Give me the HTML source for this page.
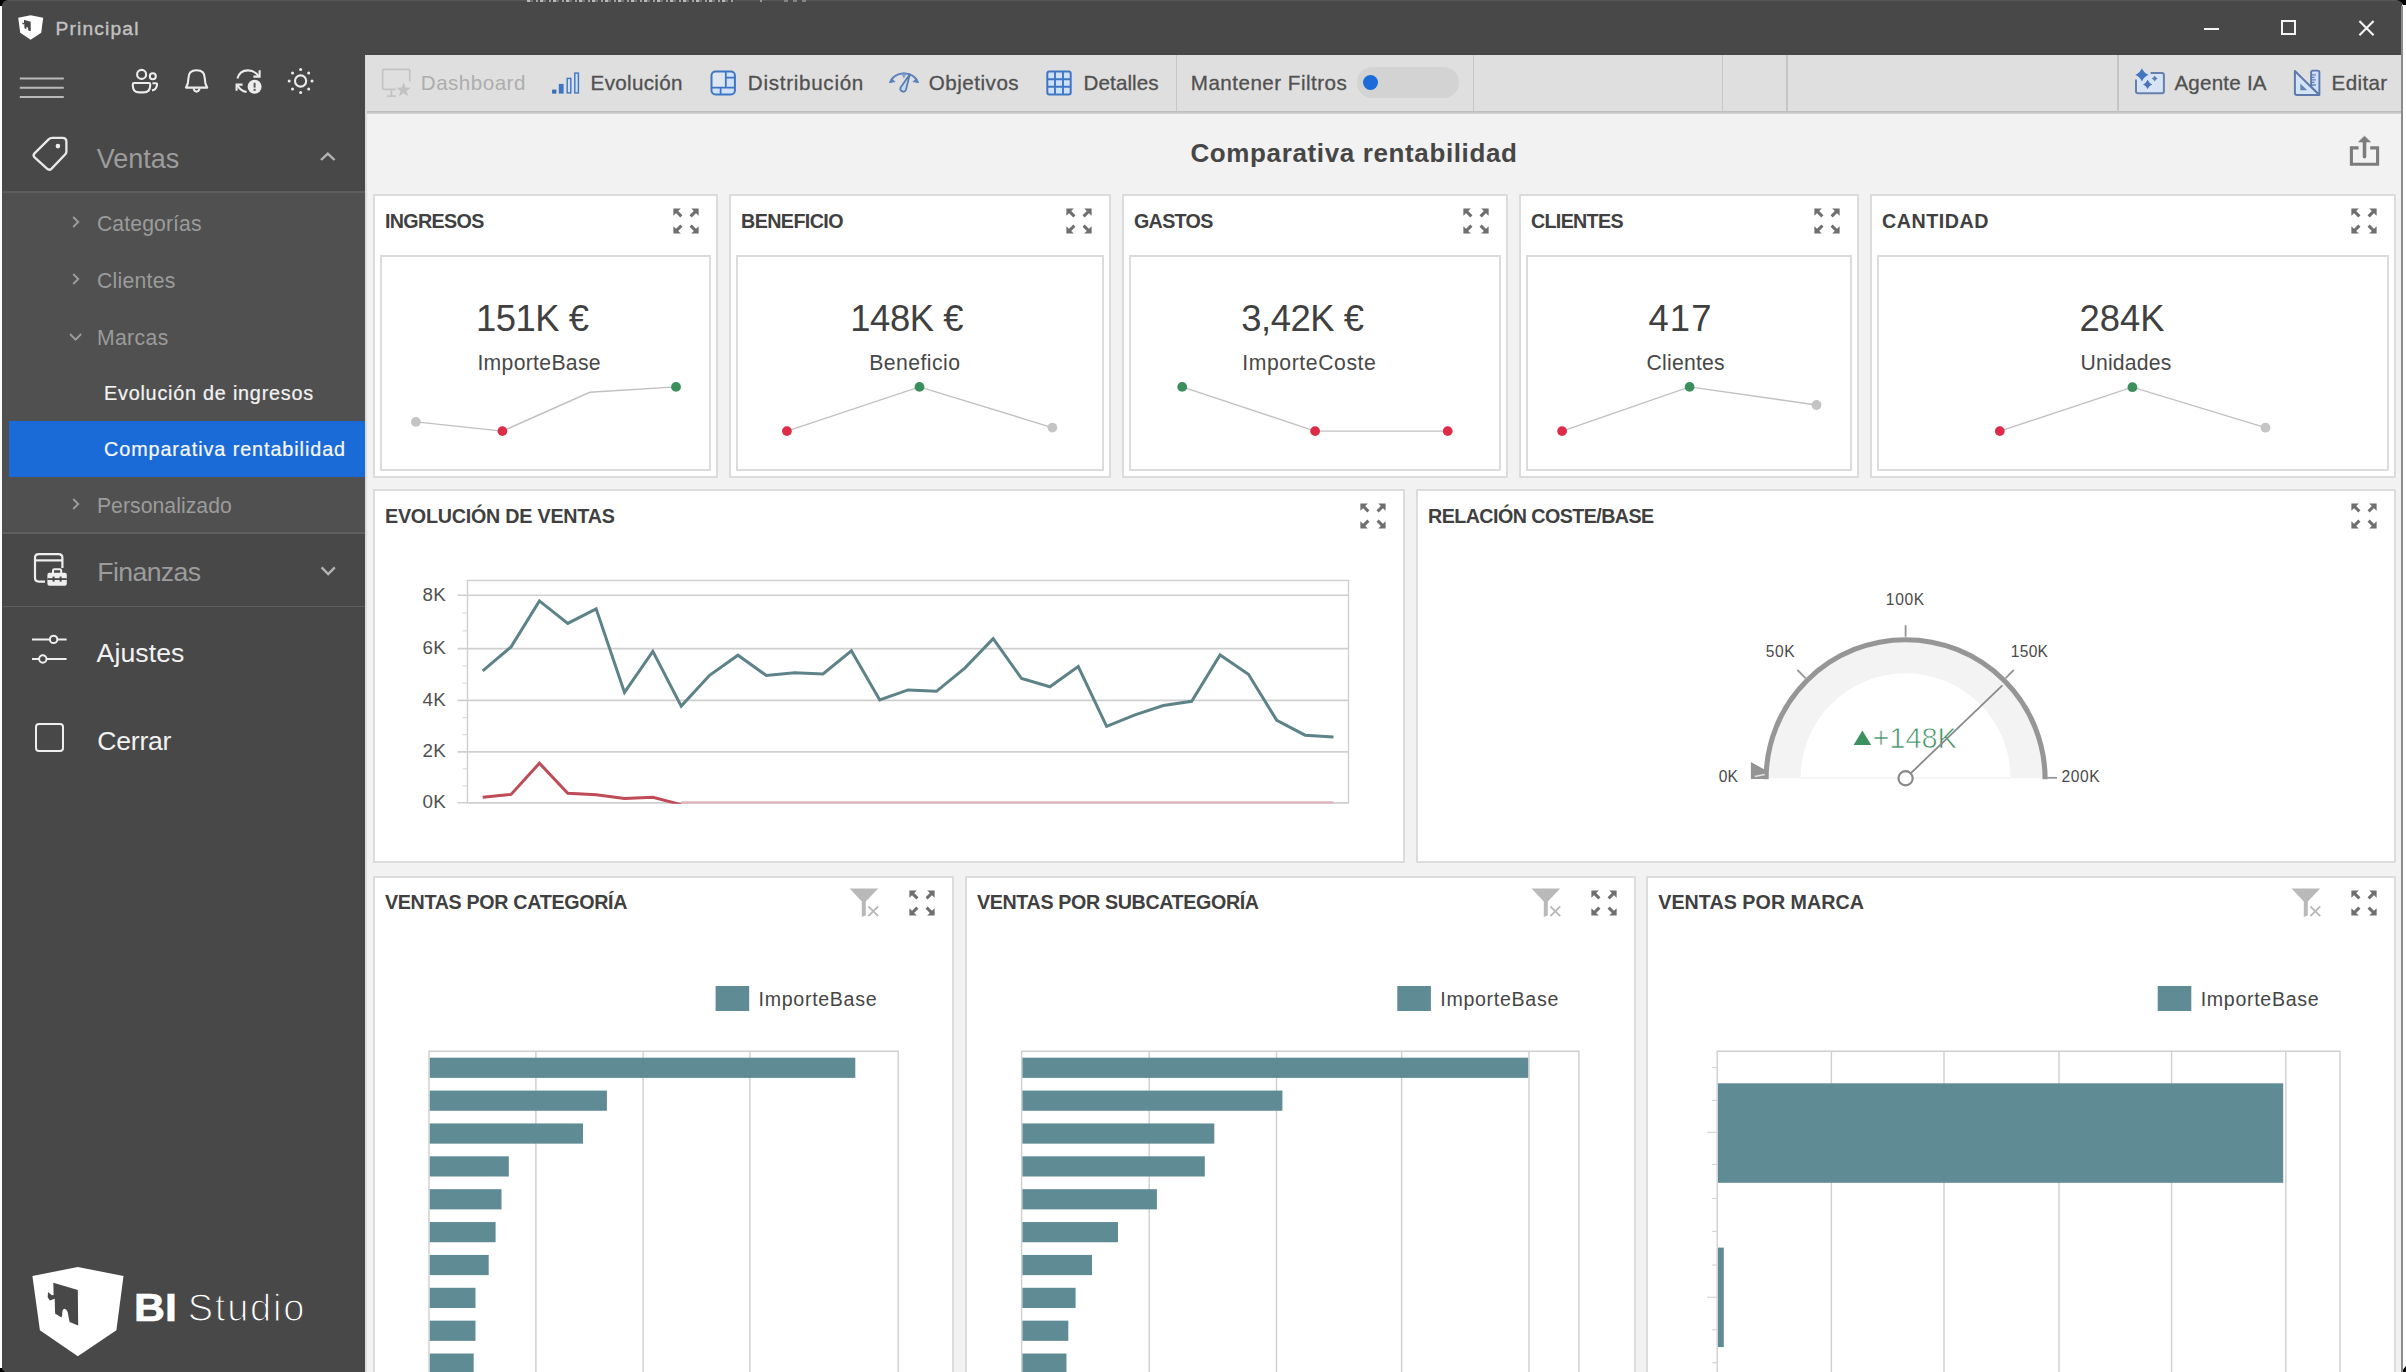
<!DOCTYPE html>
<html lang="es"><head><meta charset="utf-8"><title>Principal</title>
<style>
html,body{margin:0;padding:0;}
body{width:2406px;height:1372px;overflow:hidden;position:relative;background:#fff;font-family:"Liberation Sans",sans-serif;}
.t{position:absolute;white-space:nowrap;}
svg{display:block;overflow:visible;}
#root{position:absolute;left:0;top:0;width:2406px;height:1372px;overflow:hidden;}
</style></head><body><div id="root">
<div style="position:absolute;left:0px;top:0px;width:2406px;height:1372px;background:#fff;"></div>
<div style="position:absolute;left:2px;top:0px;width:2400px;height:1372px;background:#484848;"></div>
<div style="position:absolute;left:8px;top:0px;width:2388px;height:1px;background:#585858;"></div>
<svg style="position:absolute;left:17.2px;top:14.1px" width="27.4" height="27.4" viewBox="0 0 100 100"><path d="M4.4 14 L49.8 5 L95.5 14 L88.4 68.3 L49.8 94.3 L11.9 68.3 Z" fill="#fff"/><path d="M25.3 20.7 L49.8 28.1 L50.2 63.4 L41.6 60.1 L40.5 54.5 Q40 47.5 36.4 46.7 Q34 47 34.2 53 L33.4 55.6 L27.1 51.5 L26.7 36.7 L21.9 38.5 L19.7 35.2 L20 30 L23.8 33.3 L25.6 33 Z" fill="#484848"/></svg>
<div class="t" style="left:55.5px;top:19.05px;font-size:19.2px;line-height:19.2px;color:#c2c2c2;letter-spacing:1.17px;-webkit-text-stroke:0.4px #c2c2c2;">Principal</div>
<div style="position:absolute;left:527px;top:0px;width:208px;height:2px;background:repeating-linear-gradient(90deg,#c4c4c4 0 3px,#777 3px 6px,#484848 6px 9px,#aaa 9px 11px,#484848 11px 13px);opacity:.9;"></div>
<div style="position:absolute;left:760px;top:0px;width:2px;height:2px;background:#999;"></div>
<div style="position:absolute;left:784px;top:0px;width:22px;height:2px;background:repeating-linear-gradient(90deg,#9a9a9a 0 4px,#484848 4px 9px);opacity:.7;"></div>
<div style="position:absolute;left:2203.5px;top:27.8px;width:15px;height:2px;background:#f4f4f4;"></div>
<div style="position:absolute;left:2281.3px;top:20.4px;width:15px;height:15px;border:2px solid #f4f4f4;box-sizing:border-box;"></div>
<svg style="position:absolute;left:2357px;top:18px" width="20" height="20" viewBox="0 0 20 20"><path d="M2.4 3 L16.6 17.2 M16.6 3 L2.4 17.2" stroke="#f4f4f4" stroke-width="2.1" fill="none"/></svg>
<svg style="position:absolute;left:0;top:0" width="8" height="8"><path d="M0 0 H7 A7 7 0 0 0 2 5 V6 H0 Z" fill="#000"/></svg>
<svg style="position:absolute;left:2394px;top:0" width="12" height="8"><path d="M12 0 H3 A8 6 0 0 1 8.5 4 V5 H12 Z" fill="#000"/></svg>
<svg style="position:absolute;left:0;top:1364px" width="8" height="8"><path d="M0 8 H5 A6 6 0 0 1 2 4 H0 Z" fill="#000"/></svg>
<svg style="position:absolute;left:2398px;top:1364px" width="8" height="8"><path d="M8 8 H3 L8 2 Z" fill="#000"/></svg>
<div style="position:absolute;left:365px;top:55px;width:2036.5px;height:1317px;background:#f2f2f2;"></div>
<div style="position:absolute;left:365px;top:55px;width:2036.5px;height:56.5px;background:#dfdfdf;"></div>
<div style="position:absolute;left:365px;top:111px;width:2036.5px;height:3.2px;background:linear-gradient(#bcbcbc,#c9c9c9 70%,#e2e2e2);"></div>
<div style="position:absolute;left:365px;top:55px;width:1.6px;height:1317px;background:#dcdcdc;"></div>
<div style="position:absolute;left:2401.2px;top:6px;width:1.4px;height:1366px;background:#8c8c8c;"></div>
<svg style="position:absolute;left:378px;top:64px" width="38" height="38" viewBox="0 0 38 38"><path d="M17.6 25.4 H6.4 Q4.6 25.4 4.6 23.6 V7 Q4.6 5.4 6.4 5.4 H30 Q31.8 5.4 31.8 7 V17.4" fill="none" stroke="#c3c3c3" stroke-width="1.7"/><path d="M13.4 25.4 V32 M9.2 32.2 H17.8" stroke="#c3c3c3" stroke-width="1.7" fill="none"/><path d="M25.6 18.6 L27.5 23.4 L32.6 23.7 L28.7 27 L30 32 L25.6 29.2 L21.2 32 L22.5 27 L18.6 23.7 L23.7 23.4 Z" fill="#c2c2c2"/></svg>
<div class="t" style="left:420.8px;top:72.66px;font-size:20.6px;line-height:20.6px;color:#adadad;letter-spacing:0.48px;">Dashboard</div>
<svg style="position:absolute;left:548px;top:66px" width="36" height="34" viewBox="0 0 36 34"><rect x="4.1" y="23.6" width="4.3" height="4" fill="#3a6db5"/><rect x="10.8" y="17.9" width="4.8" height="9.7" fill="#3f76c4"/><rect x="19.2" y="12.4" width="3.6" height="14.5" fill="#cfe2fa" stroke="#3f76c4" stroke-width="1.4"/><rect x="26.8" y="7.1" width="3.6" height="19.8" fill="#cfe2fa" stroke="#3f76c4" stroke-width="1.4"/></svg>
<div class="t" style="left:590.6px;top:72.66px;font-size:20.6px;line-height:20.6px;color:#515151;letter-spacing:0.31px;-webkit-text-stroke:0.3px #515151;">Evolución</div>
<svg style="position:absolute;left:706px;top:66px" width="36" height="34" viewBox="0 0 36 34"><rect x="5.5" y="5.5" width="23.4" height="22.9" rx="4" fill="#dfe6ef"/><path d="M19.8 5.5 H25 Q28.9 5.5 28.9 9.4 V24.4 Q28.9 28.4 25 28.4 H9.4 Q5.5 28.4 5.5 24.4 V21.7 H19.8 Z" fill="#cfe2fa"/><rect x="5.5" y="5.5" width="23.4" height="22.9" rx="4" fill="none" stroke="#3f76c4" stroke-width="2"/><path d="M19.8 5.5 V21.7 M5.5 21.7 H28.9 M14.6 21.7 V28.4 M19.8 11.7 H28.9" stroke="#3f76c4" stroke-width="1.8" fill="none"/></svg>
<div class="t" style="left:747.8px;top:72.66px;font-size:20.6px;line-height:20.6px;color:#515151;letter-spacing:0.72px;-webkit-text-stroke:0.3px #515151;">Distribución</div>
<svg style="position:absolute;left:885px;top:66px" width="38" height="34" viewBox="0 0 38 34"><path d="M5.2 16 Q8 8.2 19 7.2 Q30 8.2 32.8 16" fill="none" stroke="#5e82ba" stroke-width="2.1"/><path d="M3.8 17.2 L10.6 16 L6.6 12 Z M34.2 17.2 L27.4 16 L31.4 12 Z" fill="#5e82ba"/><path d="M16.2 7.4 L21.6 7.4 L18.9 12.6 Z" fill="#7a9dcc"/><path d="M24.8 8.2 L21 23.8 A2.9 2.9 0 1 1 15.6 21.6 Z" fill="#c4daf4" stroke="#5779ae" stroke-width="1.7" stroke-linejoin="round"/></svg>
<div class="t" style="left:928.8px;top:72.66px;font-size:20.6px;line-height:20.6px;color:#515151;letter-spacing:0.5px;-webkit-text-stroke:0.3px #515151;">Objetivos</div>
<svg style="position:absolute;left:1042px;top:66px" width="36" height="34" viewBox="0 0 36 34"><rect x="5.3" y="5.5" width="23.4" height="22.9" rx="2" fill="#cfe0fb" stroke="#3f76c4" stroke-width="2"/><path d="M13 5.5 V28.4 M21 5.5 V28.4 M5.3 13.2 H28.7 M5.3 20.8 H28.7" stroke="#3f76c4" stroke-width="1.9" fill="none"/></svg>
<div class="t" style="left:1083.6px;top:72.66px;font-size:20.6px;line-height:20.6px;color:#515151;letter-spacing:0.08px;-webkit-text-stroke:0.3px #515151;">Detalles</div>
<div style="position:absolute;left:1175.5px;top:55px;width:1.6px;height:56px;background:#c6c6c6;"></div>
<div style="position:absolute;left:1472.8px;top:55px;width:1.6px;height:56px;background:#c6c6c6;"></div>
<div style="position:absolute;left:1721.9px;top:55px;width:1.6px;height:56px;background:#c6c6c6;"></div>
<div style="position:absolute;left:1786.4px;top:55px;width:1.6px;height:56px;background:#c6c6c6;"></div>
<div style="position:absolute;left:2117.2px;top:55px;width:1.6px;height:56px;background:#c6c6c6;"></div>
<div class="t" style="left:1190.8px;top:72.66px;font-size:20.6px;line-height:20.6px;color:#515151;letter-spacing:0.48px;-webkit-text-stroke:0.3px #515151;">Mantener Filtros</div>
<div style="position:absolute;left:1356.8px;top:67px;width:102px;height:31px;background:#d3d3d3;border-radius:16px;"></div>
<div style="position:absolute;left:1363.4px;top:74.5px;width:15px;height:15px;background:#1b6bd8;border-radius:50%;"></div>
<svg style="position:absolute;left:2130px;top:62px" width="40" height="38" viewBox="0 0 40 38"><path d="M20.6 10.9 H31.9 Q33.9 10.9 33.9 12.9 V29.3 Q33.9 31.3 31.9 31.3 H8 Q6 31.3 6 29.3 V17.6" fill="#d6e4f6" stroke="#667fae" stroke-width="2"/><path d="M11.9 6.2 Q13.88 10.82 18.5 12.8 Q13.88 14.78 11.9 19.4 Q9.92 14.78 5.3 12.8 Q9.92 10.82 11.9 6.2 Z" fill="#4375c0" stroke="#d6e4f6" stroke-width="1.2" paint-order="stroke"/><path d="M24.7 13.5 Q25.6 15.6 27.7 16.5 Q25.6 17.4 24.7 19.5 Q23.8 17.4 21.7 16.5 Q23.8 15.6 24.7 13.5 Z" fill="#5f7fb2"/><path d="M17.6 17.8 Q18.98 21.02 22.2 22.4 Q18.98 23.78 17.6 27 Q16.22 23.78 13 22.4 Q16.22 21.02 17.6 17.8 Z" fill="#4f74b4"/></svg>
<div class="t" style="left:2174.4px;top:72.66px;font-size:20.6px;line-height:20.6px;color:#515151;letter-spacing:0.22px;-webkit-text-stroke:0.3px #515151;">Agente IA</div>
<svg style="position:absolute;left:2290px;top:64px" width="36" height="36" viewBox="0 0 36 36"><path d="M21.1 8.4 Q21.1 6.6 22.9 6.6 H27.6 Q29.4 6.6 29.4 8.4 V30.9 L21.1 22.6 Z" fill="#cfe0fb" stroke="#6079ac" stroke-width="1.9" stroke-linejoin="round"/><path d="M4.9 7 V29 Q4.9 30.9 6.8 30.9 H29 Z" fill="#d3e4f9" stroke="#6079ac" stroke-width="2" stroke-linejoin="round"/><path d="M10.3 19.4 V26.2 H17.2 Z" fill="#6583b4"/><path d="M21.1 10.8 H25.8 M21.1 13.3 H24.6 M21.1 15.8 H25.8 M21.1 18.4 H24.6 M21.1 21 H25.8" stroke="#5f7fb4" stroke-width="1.3"/></svg>
<div class="t" style="left:2331.6px;top:72.66px;font-size:20.6px;line-height:20.6px;color:#515151;letter-spacing:0.36px;-webkit-text-stroke:0.3px #515151;">Editar</div>
<svg style="position:absolute;left:16px;top:70px" width="54" height="36" viewBox="0 0 54 36"><path d="M3.8 8.5 H47.8 M3.8 17.8 H47.8 M3.8 27 H47.8" stroke="#bababa" stroke-width="2.1" fill="none"/></svg>
<svg style="position:absolute;left:128px;top:64px" width="36" height="34" viewBox="0 0 36 34"><g fill="none" stroke="#ececec" stroke-width="2.1"><circle cx="13.6" cy="10.4" r="4.5"/><path d="M6 19 H21 Q22.2 19 22.2 20.2 V21.6 Q22.2 28.4 15.6 28.4 H11.4 Q4.8 28.4 4.8 21.6 V20.2 Q4.8 19 6 19 Z"/><circle cx="24.8" cy="12.2" r="3"/><path d="M24.4 19.2 H27.8 Q29.2 19.2 29 20.8 Q28.4 25.6 24 26.4"/></g></svg>
<svg style="position:absolute;left:180px;top:64px" width="34" height="34" viewBox="0 0 34 34"><g fill="none" stroke="#ececec" stroke-width="2.1" stroke-linejoin="round"><path d="M6 23.6 Q8.4 20 8.4 14.4 Q8.4 6.2 16.6 6.2 Q24.8 6.2 24.8 14.4 Q24.8 20 27.2 23.6 Z"/><path d="M13.6 24.4 Q14.2 27.6 16.6 27.6 Q19 27.6 19.6 24.4"/></g></svg>
<svg style="position:absolute;left:231px;top:64px" width="36" height="34" viewBox="0 0 36 34"><g fill="none" stroke="#ececec" stroke-width="2.1"><path d="M6.4 14.6 Q8.6 6.4 17 6.4 Q23.6 6.4 27.6 12.2"/><path d="M22.4 12.6 H28.6 V6.2"/><path d="M15.6 28 Q9.6 26.8 6.6 21.4"/><path d="M11.6 20.6 H5.6 V26.8"/></g><circle cx="23.6" cy="22.8" r="7" fill="#ececec"/><rect x="22.6" y="18.8" width="2" height="4.8" fill="#5a5a5a"/><rect x="22.6" y="24.8" width="2" height="2.1" fill="#5a5a5a"/></svg>
<svg style="position:absolute;left:283px;top:64px" width="36" height="34" viewBox="0 0 36 34"><circle cx="17.6" cy="17" r="5.6" fill="none" stroke="#ececec" stroke-width="2.1"/><circle cx="29" cy="17" r="1.5" fill="#ececec"/><circle cx="25.66" cy="25.06" r="1.5" fill="#ececec"/><circle cx="17.6" cy="28.4" r="1.5" fill="#ececec"/><circle cx="9.54" cy="25.06" r="1.5" fill="#ececec"/><circle cx="6.2" cy="17" r="1.5" fill="#ececec"/><circle cx="9.54" cy="8.94" r="1.5" fill="#ececec"/><circle cx="17.6" cy="5.6" r="1.5" fill="#ececec"/><circle cx="25.66" cy="8.94" r="1.5" fill="#ececec"/></svg>
<svg style="position:absolute;left:28px;top:132px" width="46" height="46" viewBox="0 0 46 46"><path d="M24.2 5.9 H34.6 Q38.4 5.9 38.4 9.7 V19.4 Q38.4 21 37.3 22.2 L23.6 36.6 Q21.3 38.8 19 36.7 L6.6 25.4 Q4.6 23.4 6.5 21.4 L20.6 7.4 Q22.2 5.9 24.2 5.9 Z" fill="none" stroke="#e9e9e9" stroke-width="2.3" stroke-linejoin="round"/><circle cx="29.9" cy="14.1" r="2.3" fill="#efefef"/></svg>
<div class="t" style="left:96.8px;top:145.54px;font-size:27px;line-height:27px;color:#9c9c9c;letter-spacing:-0.03px;">Ventas</div>
<svg style="position:absolute;left:318px;top:150px" width="20" height="14" viewBox="0 0 20 14"><path d="M3 10 L9.8 3.6 L16.6 10" fill="none" stroke="#b4b4b4" stroke-width="2.4"/></svg>
<div style="position:absolute;left:2px;top:192px;width:363px;height:341px;background:#505050;"></div>
<div style="position:absolute;left:2px;top:191.4px;width:363px;height:1.6px;background:#5d5d5d;"></div>
<div style="position:absolute;left:2px;top:532.2px;width:363px;height:1.6px;background:#5f5f5f;"></div>
<div style="position:absolute;left:2px;top:605.6px;width:363px;height:1.6px;background:#5f5f5f;"></div>
<svg style="position:absolute;left:70px;top:214px" width="12" height="16" viewBox="0 0 12 16"><path d="M3.2 3 L8.2 8 L3.2 13" fill="none" stroke="#9c9c9c" stroke-width="1.9"/></svg>
<div class="t" style="left:96.9px;top:212.75px;font-size:21.2px;line-height:21.2px;color:#9b9b9b;letter-spacing:0.12px;">Categorías</div>
<svg style="position:absolute;left:70px;top:271px" width="12" height="16" viewBox="0 0 12 16"><path d="M3.2 3 L8.2 8 L3.2 13" fill="none" stroke="#9c9c9c" stroke-width="1.9"/></svg>
<div class="t" style="left:96.9px;top:269.95px;font-size:21.2px;line-height:21.2px;color:#9b9b9b;letter-spacing:0.29px;">Clientes</div>
<svg style="position:absolute;left:67px;top:330px" width="18" height="14" viewBox="0 0 18 14"><path d="M3 4 L8.6 9.6 L14.2 4" fill="none" stroke="#9c9c9c" stroke-width="1.9"/></svg>
<div class="t" style="left:96.9px;top:327.15px;font-size:21.2px;line-height:21.2px;color:#9b9b9b;letter-spacing:0.4px;">Marcas</div>
<div class="t" style="left:104px;top:384.04px;font-size:19.8px;line-height:19.8px;color:#f3f3f3;letter-spacing:0.78px;-webkit-text-stroke:0.22px #f3f3f3;">Evolución de ingresos</div>
<div style="position:absolute;left:9px;top:421px;width:356px;height:55.5px;background:#1a6ad8;"></div>
<div class="t" style="left:104px;top:439.84px;font-size:19.8px;line-height:19.8px;color:#f6f8fc;letter-spacing:0.92px;-webkit-text-stroke:0.22px #f6f8fc;">Comparativa rentabilidad</div>
<svg style="position:absolute;left:70px;top:496px" width="12" height="16" viewBox="0 0 12 16"><path d="M3.2 3 L8.2 8 L3.2 13" fill="none" stroke="#9c9c9c" stroke-width="1.9"/></svg>
<div class="t" style="left:96.9px;top:495.05px;font-size:21.2px;line-height:21.2px;color:#9b9b9b;letter-spacing:0.05px;">Personalizado</div>
<svg style="position:absolute;left:30px;top:549px" width="42" height="42" viewBox="0 0 42 42"><g fill="none" stroke="#efefef" stroke-width="2.2"><path d="M15 32.6 H8.8 Q5 32.6 5 28.8 V9 Q5 5.2 8.8 5.2 H28.6 Q32.4 5.2 32.4 9 V19"/><path d="M5 11.4 H32.4"/></g><rect x="17.4" y="23.8" width="19.4" height="13" rx="2" fill="#efefef"/><path d="M23 24 V21.6 Q23 20.2 24.4 20.2 H29.8 Q31.2 20.2 31.2 21.6 V24" fill="none" stroke="#efefef" stroke-width="2"/><rect x="17.4" y="29.2" width="19.4" height="1.8" fill="#484848"/><rect x="22.6" y="27.6" width="2" height="5" fill="#484848"/><rect x="29.6" y="27.6" width="2" height="5" fill="#484848"/></svg>
<div class="t" style="left:97.3px;top:558.68px;font-size:26.6px;line-height:26.6px;color:#9c9c9c;letter-spacing:-0.6px;">Finanzas</div>
<svg style="position:absolute;left:318px;top:563px" width="20" height="16" viewBox="0 0 20 16"><path d="M3.6 4.4 L10.2 11 L16.8 4.4" fill="none" stroke="#b4b4b4" stroke-width="2.4"/></svg>
<svg style="position:absolute;left:28px;top:628px" width="44" height="42" viewBox="0 0 44 42"><g fill="none" stroke="#eeeeee" stroke-width="2"><path d="M4 11.4 H22 M29.4 11.4 H38.6"/><circle cx="25.6" cy="11.4" r="3.7"/><path d="M4 31 H11 M18.4 31 H38.6"/><circle cx="14.8" cy="31" r="3.7"/></g></svg>
<div class="t" style="left:96.6px;top:639.88px;font-size:26.6px;line-height:26.6px;color:#f2f2f2;letter-spacing:0.1px;">Ajustes</div>
<div style="position:absolute;left:34.6px;top:723.4px;width:29.6px;height:29px;border:2.2px solid #eee;border-radius:4px;box-sizing:border-box;"></div>
<div class="t" style="left:97.3px;top:728.48px;font-size:26.6px;line-height:26.6px;color:#f2f2f2;letter-spacing:-0.25px;">Cerrar</div>
<svg style="position:absolute;left:28px;top:1262px" width="100" height="100" viewBox="0 0 100 100"><path d="M4.4 14 L49.8 5 L95.5 14 L88.4 68.3 L49.8 94.3 L11.9 68.3 Z" fill="#fff"/><path d="M25.3 20.7 L49.8 28.1 L50.2 63.4 L41.6 60.1 L40.5 54.5 Q40 47.5 36.4 46.7 Q34 47 34.2 53 L33.4 55.6 L27.1 51.5 L26.7 36.7 L21.9 38.5 L19.7 35.2 L20 30 L23.8 33.3 L25.6 33 Z" fill="#484848"/></svg>
<div class="t" style="left:133.7px;top:1289.23px;font-size:38px;line-height:38px;color:#fff;font-weight:bold;-webkit-text-stroke:0.6px #fff;transform:scaleX(1.13);transform-origin:0 0;">BI</div>
<div class="t" style="left:187.7px;top:1289.23px;font-size:38px;line-height:38px;color:#fff;letter-spacing:1.79px;-webkit-text-stroke:1.25px #484848;">Studio</div>
<div class="t" style="left:1190.4px;top:140.09px;font-size:26px;line-height:26px;color:#464646;letter-spacing:0.63px;font-weight:bold;">Comparativa rentabilidad</div>
<svg style="position:absolute;left:2344px;top:132px" width="40" height="38" viewBox="0 0 40 38"><path d="M14.6 15.9 H7.4 V32.3 H33.6 V15.9 H26.2" fill="none" stroke="#7c7c7c" stroke-width="3.1"/><path d="M20.5 24.8 V9" stroke="#7c7c7c" stroke-width="3.6" stroke-linecap="round" fill="none"/><path d="M20.5 4.2 L26.4 9.9 H14.6 Z" fill="#7c7c7c" stroke="#7c7c7c" stroke-width="0.8" stroke-linejoin="round"/></svg>
<div style="position:absolute;left:373px;top:194px;width:345px;height:284px;background:#fff;border:2px solid #dcdcdc;box-sizing:border-box;"></div>
<div class="t" style="left:385px;top:212.02px;font-size:19.7px;line-height:19.7px;color:#404040;letter-spacing:-0.66px;font-weight:bold;">INGRESOS</div>
<svg style="position:absolute;left:673px;top:207.6px" width="26" height="26" viewBox="0 0 26 26"><path d="M0.4 0.4 L7.8 0.4 L0.4 7.8 Z" fill="#6f6f6f"/><path d="M2.4 2.4 L8.4 8.4" stroke="#6f6f6f" stroke-width="3" fill="none"/><path d="M25.6 0.4 L18.2 0.4 L25.6 7.8 Z" fill="#6f6f6f"/><path d="M23.6 2.4 L17.6 8.4" stroke="#6f6f6f" stroke-width="3" fill="none"/><path d="M0.4 25.6 L7.8 25.6 L0.4 18.2 Z" fill="#6f6f6f"/><path d="M2.4 23.6 L8.4 17.6" stroke="#6f6f6f" stroke-width="3" fill="none"/><path d="M25.6 25.6 L18.2 25.6 L25.6 18.2 Z" fill="#6f6f6f"/><path d="M23.6 23.6 L17.6 17.6" stroke="#6f6f6f" stroke-width="3" fill="none"/></svg>
<div style="position:absolute;left:380px;top:255px;width:331px;height:215.6px;border:2px solid #dcdcdc;box-sizing:border-box;"></div>
<div style="position:absolute;left:729px;top:194px;width:382px;height:284px;background:#fff;border:2px solid #dcdcdc;box-sizing:border-box;"></div>
<div class="t" style="left:741px;top:212.02px;font-size:19.7px;line-height:19.7px;color:#404040;letter-spacing:-0.58px;font-weight:bold;">BENEFICIO</div>
<svg style="position:absolute;left:1066px;top:207.6px" width="26" height="26" viewBox="0 0 26 26"><path d="M0.4 0.4 L7.8 0.4 L0.4 7.8 Z" fill="#6f6f6f"/><path d="M2.4 2.4 L8.4 8.4" stroke="#6f6f6f" stroke-width="3" fill="none"/><path d="M25.6 0.4 L18.2 0.4 L25.6 7.8 Z" fill="#6f6f6f"/><path d="M23.6 2.4 L17.6 8.4" stroke="#6f6f6f" stroke-width="3" fill="none"/><path d="M0.4 25.6 L7.8 25.6 L0.4 18.2 Z" fill="#6f6f6f"/><path d="M2.4 23.6 L8.4 17.6" stroke="#6f6f6f" stroke-width="3" fill="none"/><path d="M25.6 25.6 L18.2 25.6 L25.6 18.2 Z" fill="#6f6f6f"/><path d="M23.6 23.6 L17.6 17.6" stroke="#6f6f6f" stroke-width="3" fill="none"/></svg>
<div style="position:absolute;left:736px;top:255px;width:368px;height:215.6px;border:2px solid #dcdcdc;box-sizing:border-box;"></div>
<div style="position:absolute;left:1122px;top:194px;width:386px;height:284px;background:#fff;border:2px solid #dcdcdc;box-sizing:border-box;"></div>
<div class="t" style="left:1134px;top:212.02px;font-size:19.7px;line-height:19.7px;color:#404040;letter-spacing:-0.69px;font-weight:bold;">GASTOS</div>
<svg style="position:absolute;left:1463px;top:207.6px" width="26" height="26" viewBox="0 0 26 26"><path d="M0.4 0.4 L7.8 0.4 L0.4 7.8 Z" fill="#6f6f6f"/><path d="M2.4 2.4 L8.4 8.4" stroke="#6f6f6f" stroke-width="3" fill="none"/><path d="M25.6 0.4 L18.2 0.4 L25.6 7.8 Z" fill="#6f6f6f"/><path d="M23.6 2.4 L17.6 8.4" stroke="#6f6f6f" stroke-width="3" fill="none"/><path d="M0.4 25.6 L7.8 25.6 L0.4 18.2 Z" fill="#6f6f6f"/><path d="M2.4 23.6 L8.4 17.6" stroke="#6f6f6f" stroke-width="3" fill="none"/><path d="M25.6 25.6 L18.2 25.6 L25.6 18.2 Z" fill="#6f6f6f"/><path d="M23.6 23.6 L17.6 17.6" stroke="#6f6f6f" stroke-width="3" fill="none"/></svg>
<div style="position:absolute;left:1129px;top:255px;width:372px;height:215.6px;border:2px solid #dcdcdc;box-sizing:border-box;"></div>
<div style="position:absolute;left:1519px;top:194px;width:340px;height:284px;background:#fff;border:2px solid #dcdcdc;box-sizing:border-box;"></div>
<div class="t" style="left:1531px;top:212.02px;font-size:19.7px;line-height:19.7px;color:#404040;letter-spacing:-0.69px;font-weight:bold;">CLIENTES</div>
<svg style="position:absolute;left:1814px;top:207.6px" width="26" height="26" viewBox="0 0 26 26"><path d="M0.4 0.4 L7.8 0.4 L0.4 7.8 Z" fill="#6f6f6f"/><path d="M2.4 2.4 L8.4 8.4" stroke="#6f6f6f" stroke-width="3" fill="none"/><path d="M25.6 0.4 L18.2 0.4 L25.6 7.8 Z" fill="#6f6f6f"/><path d="M23.6 2.4 L17.6 8.4" stroke="#6f6f6f" stroke-width="3" fill="none"/><path d="M0.4 25.6 L7.8 25.6 L0.4 18.2 Z" fill="#6f6f6f"/><path d="M2.4 23.6 L8.4 17.6" stroke="#6f6f6f" stroke-width="3" fill="none"/><path d="M25.6 25.6 L18.2 25.6 L25.6 18.2 Z" fill="#6f6f6f"/><path d="M23.6 23.6 L17.6 17.6" stroke="#6f6f6f" stroke-width="3" fill="none"/></svg>
<div style="position:absolute;left:1526px;top:255px;width:326px;height:215.6px;border:2px solid #dcdcdc;box-sizing:border-box;"></div>
<div style="position:absolute;left:1870px;top:194px;width:526px;height:284px;background:#fff;border:2px solid #dcdcdc;box-sizing:border-box;"></div>
<div class="t" style="left:1882px;top:212.02px;font-size:19.7px;line-height:19.7px;color:#404040;letter-spacing:0.52px;font-weight:bold;">CANTIDAD</div>
<svg style="position:absolute;left:2351px;top:207.6px" width="26" height="26" viewBox="0 0 26 26"><path d="M0.4 0.4 L7.8 0.4 L0.4 7.8 Z" fill="#6f6f6f"/><path d="M2.4 2.4 L8.4 8.4" stroke="#6f6f6f" stroke-width="3" fill="none"/><path d="M25.6 0.4 L18.2 0.4 L25.6 7.8 Z" fill="#6f6f6f"/><path d="M23.6 2.4 L17.6 8.4" stroke="#6f6f6f" stroke-width="3" fill="none"/><path d="M0.4 25.6 L7.8 25.6 L0.4 18.2 Z" fill="#6f6f6f"/><path d="M2.4 23.6 L8.4 17.6" stroke="#6f6f6f" stroke-width="3" fill="none"/><path d="M25.6 25.6 L18.2 25.6 L25.6 18.2 Z" fill="#6f6f6f"/><path d="M23.6 23.6 L17.6 17.6" stroke="#6f6f6f" stroke-width="3" fill="none"/></svg>
<div style="position:absolute;left:1877px;top:255px;width:512px;height:215.6px;border:2px solid #dcdcdc;box-sizing:border-box;"></div>
<div class="t" style="left:475.9px;top:301.09px;font-size:36.4px;line-height:36.4px;color:#404040;letter-spacing:-0.47px;">151K €</div>
<div class="t" style="left:477.4px;top:351.85px;font-size:21.2px;line-height:21.2px;color:#484848;letter-spacing:0.31px;">ImporteBase</div>
<div class="t" style="left:850.3px;top:301.09px;font-size:36.4px;line-height:36.4px;color:#404040;letter-spacing:-0.43px;">148K €</div>
<div class="t" style="left:869.2px;top:351.85px;font-size:21.2px;line-height:21.2px;color:#484848;letter-spacing:0.45px;">Beneficio</div>
<div class="t" style="left:1241.2px;top:301.09px;font-size:36.4px;line-height:36.4px;color:#404040;letter-spacing:-0.45px;">3,42K €</div>
<div class="t" style="left:1242.2px;top:351.85px;font-size:21.2px;line-height:21.2px;color:#484848;letter-spacing:0.59px;">ImporteCoste</div>
<div class="t" style="left:1648.5px;top:301.09px;font-size:36.4px;line-height:36.4px;color:#404040;letter-spacing:1.13px;">417</div>
<div class="t" style="left:1646.6px;top:351.85px;font-size:21.2px;line-height:21.2px;color:#484848;letter-spacing:0.22px;">Clientes</div>
<div class="t" style="left:2079.4px;top:301.09px;font-size:36.4px;line-height:36.4px;color:#404040;letter-spacing:0.03px;">284K</div>
<div class="t" style="left:2080.4px;top:351.85px;font-size:21.2px;line-height:21.2px;color:#484848;letter-spacing:0.22px;">Unidades</div>
<svg style="position:absolute;left:0;top:0" width="2406" height="1372" viewBox="0 0 2406 1372"><path d="M415.9 421.9 L502.4 431.1 L589.8 392.3 L676 386.9" fill="none" stroke="#c0c0c0" stroke-width="1.4"/><circle cx="415.9" cy="421.9" r="4.9" fill="#c4c4c4"/><circle cx="502.4" cy="431.1" r="4.9" fill="#dc2c48"/><circle cx="676" cy="386.9" r="4.9" fill="#3b8f5c"/></svg>
<svg style="position:absolute;left:0;top:0" width="2406" height="1372" viewBox="0 0 2406 1372"><path d="M786.9 431.1 L919.5 386.9 L1052.4 427.6" fill="none" stroke="#c0c0c0" stroke-width="1.4"/><circle cx="786.9" cy="431.1" r="4.9" fill="#dc2c48"/><circle cx="919.5" cy="386.9" r="4.9" fill="#3b8f5c"/><circle cx="1052.4" cy="427.6" r="4.9" fill="#c4c4c4"/></svg>
<svg style="position:absolute;left:0;top:0" width="2406" height="1372" viewBox="0 0 2406 1372"><path d="M1182.2 386.9 L1315.1 431.1 L1447.7 431.1" fill="none" stroke="#c0c0c0" stroke-width="1.4"/><circle cx="1182.2" cy="386.9" r="4.9" fill="#3b8f5c"/><circle cx="1315.1" cy="431.1" r="4.9" fill="#dc2c48"/><circle cx="1447.7" cy="431.1" r="4.9" fill="#dc2c48"/></svg>
<svg style="position:absolute;left:0;top:0" width="2406" height="1372" viewBox="0 0 2406 1372"><path d="M1562.1 431.1 L1689.6 386.9 L1816.5 405" fill="none" stroke="#c0c0c0" stroke-width="1.4"/><circle cx="1562.1" cy="431.1" r="4.9" fill="#dc2c48"/><circle cx="1689.6" cy="386.9" r="4.9" fill="#3b8f5c"/><circle cx="1816.5" cy="405" r="4.9" fill="#c4c4c4"/></svg>
<svg style="position:absolute;left:0;top:0" width="2406" height="1372" viewBox="0 0 2406 1372"><path d="M1999.8 431.1 L2132.4 387.2 L2265.5 427.7" fill="none" stroke="#c0c0c0" stroke-width="1.4"/><circle cx="1999.8" cy="431.1" r="4.9" fill="#dc2c48"/><circle cx="2132.4" cy="387.2" r="4.9" fill="#3b8f5c"/><circle cx="2265.5" cy="427.7" r="4.9" fill="#c4c4c4"/></svg>
<div style="position:absolute;left:373px;top:489px;width:1031.6px;height:374px;background:#fff;border:2px solid #dcdcdc;box-sizing:border-box;"></div>
<div class="t" style="left:385px;top:507.02px;font-size:19.7px;line-height:19.7px;color:#404040;letter-spacing:-0.22px;font-weight:bold;">EVOLUCIÓN DE VENTAS</div>
<svg style="position:absolute;left:1359.6px;top:502.6px" width="26" height="26" viewBox="0 0 26 26"><path d="M0.4 0.4 L7.8 0.4 L0.4 7.8 Z" fill="#6f6f6f"/><path d="M2.4 2.4 L8.4 8.4" stroke="#6f6f6f" stroke-width="3" fill="none"/><path d="M25.6 0.4 L18.2 0.4 L25.6 7.8 Z" fill="#6f6f6f"/><path d="M23.6 2.4 L17.6 8.4" stroke="#6f6f6f" stroke-width="3" fill="none"/><path d="M0.4 25.6 L7.8 25.6 L0.4 18.2 Z" fill="#6f6f6f"/><path d="M2.4 23.6 L8.4 17.6" stroke="#6f6f6f" stroke-width="3" fill="none"/><path d="M25.6 25.6 L18.2 25.6 L25.6 18.2 Z" fill="#6f6f6f"/><path d="M23.6 23.6 L17.6 17.6" stroke="#6f6f6f" stroke-width="3" fill="none"/></svg>
<svg style="position:absolute;left:0;top:0" width="2406" height="1372" viewBox="0 0 2406 1372"><path d="M457.5 595.3 H1348.5" stroke="#cfcfcf" stroke-width="1.6"/><path d="M457.5 648.6 H1348.5" stroke="#cfcfcf" stroke-width="1.6"/><path d="M457.5 700.4 H1348.5" stroke="#cfcfcf" stroke-width="1.6"/><path d="M457.5 751.9 H1348.5" stroke="#cfcfcf" stroke-width="1.6"/><path d="M457.5 802.8 H1348.5" stroke="#cfcfcf" stroke-width="1.6"/><path d="M462.5 785.83 H467.5" stroke="#dcdcdc" stroke-width="1.2"/><path d="M462.5 768.87 H467.5" stroke="#dcdcdc" stroke-width="1.2"/><path d="M462.5 734.73 H467.5" stroke="#dcdcdc" stroke-width="1.2"/><path d="M462.5 717.57 H467.5" stroke="#dcdcdc" stroke-width="1.2"/><path d="M462.5 683.13 H467.5" stroke="#dcdcdc" stroke-width="1.2"/><path d="M462.5 665.87 H467.5" stroke="#dcdcdc" stroke-width="1.2"/><path d="M462.5 630.83 H467.5" stroke="#dcdcdc" stroke-width="1.2"/><path d="M462.5 613.07 H467.5" stroke="#dcdcdc" stroke-width="1.2"/><rect x="467.5" y="580.5" width="881" height="222.3" fill="none" stroke="#cfcfcf" stroke-width="1.4"/><svg x="467.5" y="580.5" width="881" height="223.2" viewBox="467.5 580.5 881 223.2" style="overflow:hidden"><path d="M482.7 670.8 L511.06 646.9 L539.42 600.9 L567.78 623.4 L596.14 608.8 L624.5 692.4 L652.86 651.4 L681.22 706.1 L709.58 675.3 L737.94 655.2 L766.3 675.5 L794.66 672.8 L823.02 673.9 L851.38 650.8 L879.74 699.9 L908.1 689.9 L936.46 691.3 L964.82 668.1 L993.18 638.6 L1021.54 678.5 L1049.9 686.8 L1078.26 666.6 L1106.62 726.3 L1134.98 714.8 L1163.34 705.5 L1191.7 701.3 L1220.06 655 L1248.42 674.3 L1276.78 720.4 L1305.14 735.2 L1333.5 736.9" fill="none" stroke="#5d8288" stroke-width="3" stroke-linejoin="miter"/><path d="M681.22 802.5 H1333.5" stroke="#dcb4bc" stroke-width="2.4"/><path d="M482.7 797.3 L511.06 794.4 L539.42 763.2 L567.78 793.2 L596.14 794.8 L624.5 798.6 L652.86 797.3 L681.22 804.6" fill="none" stroke="#bf4a58" stroke-width="3" stroke-linejoin="miter"/></svg></svg>
<div class="t" style="left:422.6px;top:585.79px;font-size:18.8px;line-height:18.8px;color:#505050;letter-spacing:0.2px;">8K</div>
<div class="t" style="left:422.6px;top:639.09px;font-size:18.8px;line-height:18.8px;color:#505050;letter-spacing:0.2px;">6K</div>
<div class="t" style="left:422.6px;top:690.89px;font-size:18.8px;line-height:18.8px;color:#505050;letter-spacing:0.2px;">4K</div>
<div class="t" style="left:422.6px;top:742.39px;font-size:18.8px;line-height:18.8px;color:#505050;letter-spacing:0.2px;">2K</div>
<div class="t" style="left:422.6px;top:793.29px;font-size:18.8px;line-height:18.8px;color:#505050;letter-spacing:0.2px;">0K</div>
<div style="position:absolute;left:1416px;top:489px;width:980px;height:374px;background:#fff;border:2px solid #dcdcdc;box-sizing:border-box;"></div>
<div class="t" style="left:1428px;top:507.02px;font-size:19.7px;line-height:19.7px;color:#404040;letter-spacing:-0.56px;font-weight:bold;">RELACIÓN COSTE/BASE</div>
<svg style="position:absolute;left:2351px;top:502.6px" width="26" height="26" viewBox="0 0 26 26"><path d="M0.4 0.4 L7.8 0.4 L0.4 7.8 Z" fill="#6f6f6f"/><path d="M2.4 2.4 L8.4 8.4" stroke="#6f6f6f" stroke-width="3" fill="none"/><path d="M25.6 0.4 L18.2 0.4 L25.6 7.8 Z" fill="#6f6f6f"/><path d="M23.6 2.4 L17.6 8.4" stroke="#6f6f6f" stroke-width="3" fill="none"/><path d="M0.4 25.6 L7.8 25.6 L0.4 18.2 Z" fill="#6f6f6f"/><path d="M2.4 23.6 L8.4 17.6" stroke="#6f6f6f" stroke-width="3" fill="none"/><path d="M25.6 25.6 L18.2 25.6 L25.6 18.2 Z" fill="#6f6f6f"/><path d="M23.6 23.6 L17.6 17.6" stroke="#6f6f6f" stroke-width="3" fill="none"/></svg>
<svg style="position:absolute;left:0;top:0" width="2406" height="1372" viewBox="0 0 2406 1372"><path d="M1768.1 778.2 A137.5 137.5 0 0 1 2043.1 778.2 L2010.6 778.2 A105 105 0 0 0 1800.6 778.2 Z" fill="#f3f3f3"/><path d="M1800.6 778 H2010.6" stroke="#f1f1f1" stroke-width="1.4"/><path d="M1766.1 779.2 A139.5 139.5 0 0 1 2045.1 779.2" fill="none" stroke="#969696" stroke-width="5.1"/><path d="M1805.54 678.14 L1797.41 670.01" stroke="#959595" stroke-width="1.8"/><path d="M1905.6 636.7 L1905.6 625.2" stroke="#959595" stroke-width="1.8"/><path d="M2005.66 678.14 L2013.79 670.01" stroke="#959595" stroke-width="1.8"/><path d="M2047.1 777.8 H2057.1" stroke="#959595" stroke-width="1.8"/><path d="M1750.9 762 L1750.9 779 L1768 779 L1768 771.4 Z" fill="#949494"/><path d="M1754.8 776.4 L1764.8 774.4" stroke="#e4e4e4" stroke-width="1.5"/><path d="M1853.6 745 L1862.4 730.4 L1871.2 745 Z" fill="#3b9160"/></svg>
<div class="t" style="left:1885.8px;top:591.99px;font-size:15.6px;line-height:15.6px;color:#4a4a4a;letter-spacing:0.66px;">100K</div>
<div class="t" style="left:1765.8px;top:644.39px;font-size:15.6px;line-height:15.6px;color:#4a4a4a;letter-spacing:0.52px;">50K</div>
<div class="t" style="left:2010.8px;top:644.39px;font-size:15.6px;line-height:15.6px;color:#4a4a4a;letter-spacing:0.26px;">150K</div>
<div class="t" style="left:1718.8px;top:768.79px;font-size:15.6px;line-height:15.6px;color:#4a4a4a;letter-spacing:0.12px;">0K</div>
<div class="t" style="left:2061.4px;top:768.79px;font-size:15.6px;line-height:15.6px;color:#4a4a4a;letter-spacing:0.59px;">200K</div>
<div class="t" style="left:1872.5px;top:724.25px;font-size:29px;line-height:29px;color:#3d8f63;letter-spacing:-0.07px;-webkit-text-stroke:0.75px #fff;">+148K</div>
<svg style="position:absolute;left:0;top:0" width="2406" height="1372" viewBox="0 0 2406 1372"><path d="M1911 773 L2002.4 685.4" stroke="#8a8a8a" stroke-width="1.8"/><circle cx="1905.6" cy="778.2" r="7.1" fill="#fff" stroke="#8a8a8a" stroke-width="2.2"/></svg>
<div style="position:absolute;left:373px;top:876px;width:581px;height:524px;background:#fff;border:2px solid #dcdcdc;box-sizing:border-box;"></div>
<div class="t" style="left:385px;top:893.12px;font-size:19.7px;line-height:19.7px;color:#404040;letter-spacing:-0.33px;font-weight:bold;">VENTAS POR CATEGORÍA</div>
<svg style="position:absolute;left:909px;top:889.6px" width="26" height="26" viewBox="0 0 26 26"><path d="M0.4 0.4 L7.8 0.4 L0.4 7.8 Z" fill="#6f6f6f"/><path d="M2.4 2.4 L8.4 8.4" stroke="#6f6f6f" stroke-width="3" fill="none"/><path d="M25.6 0.4 L18.2 0.4 L25.6 7.8 Z" fill="#6f6f6f"/><path d="M23.6 2.4 L17.6 8.4" stroke="#6f6f6f" stroke-width="3" fill="none"/><path d="M0.4 25.6 L7.8 25.6 L0.4 18.2 Z" fill="#6f6f6f"/><path d="M2.4 23.6 L8.4 17.6" stroke="#6f6f6f" stroke-width="3" fill="none"/><path d="M25.6 25.6 L18.2 25.6 L25.6 18.2 Z" fill="#6f6f6f"/><path d="M23.6 23.6 L17.6 17.6" stroke="#6f6f6f" stroke-width="3" fill="none"/></svg>
<svg style="position:absolute;left:849px;top:887.4px" width="32" height="32" viewBox="0 0 32 32"><path d="M0.6 1.6 H29.2 L16.8 14.4 V28.6 L12.8 30 V14.4 Z" fill="#b9b9b9"/><path d="M19.4 19.4 L29.2 29.2 M29.2 19.4 L19.4 29.2" stroke="#b9b9b9" stroke-width="1.9" fill="none"/></svg>
<svg style="position:absolute;left:0;top:0" width="2406" height="1372" viewBox="0 0 2406 1372"><path d="M535.9 1051.2 V1372" stroke="#cfcfcf" stroke-width="1.4"/><path d="M643.1 1051.2 V1372" stroke="#cfcfcf" stroke-width="1.4"/><path d="M749.9 1051.2 V1372" stroke="#cfcfcf" stroke-width="1.4"/><path d="M429 1372 V1051.2 H898.2 V1372" fill="none" stroke="#cfcfcf" stroke-width="1.4"/><rect x="429.8" y="1057.7" width="425.5" height="20.2" fill="#5f8b95"/><rect x="429.8" y="1090.57" width="177.1" height="20.2" fill="#5f8b95"/><rect x="429.8" y="1123.44" width="153.2" height="20.2" fill="#5f8b95"/><rect x="429.8" y="1156.31" width="79" height="20.2" fill="#5f8b95"/><rect x="429.8" y="1189.18" width="71.7" height="20.2" fill="#5f8b95"/><rect x="429.8" y="1222.05" width="65.8" height="20.2" fill="#5f8b95"/><rect x="429.8" y="1254.92" width="58.9" height="20.2" fill="#5f8b95"/><rect x="429.8" y="1287.79" width="45.7" height="20.2" fill="#5f8b95"/><rect x="429.8" y="1320.66" width="45.7" height="20.2" fill="#5f8b95"/><rect x="429.8" y="1353.53" width="43.9" height="20.2" fill="#5f8b95"/><rect x="715.6" y="986" width="33.6" height="25" fill="#5f8b95"/></svg>
<div class="t" style="left:758.6px;top:989.61px;font-size:19.6px;line-height:19.6px;color:#454545;letter-spacing:0.69px;">ImporteBase</div>
<div style="position:absolute;left:965px;top:876px;width:670.7px;height:524px;background:#fff;border:2px solid #dcdcdc;box-sizing:border-box;"></div>
<div class="t" style="left:977px;top:893.12px;font-size:19.7px;line-height:19.7px;color:#404040;letter-spacing:-0.37px;font-weight:bold;">VENTAS POR SUBCATEGORÍA</div>
<svg style="position:absolute;left:1590.7px;top:889.6px" width="26" height="26" viewBox="0 0 26 26"><path d="M0.4 0.4 L7.8 0.4 L0.4 7.8 Z" fill="#6f6f6f"/><path d="M2.4 2.4 L8.4 8.4" stroke="#6f6f6f" stroke-width="3" fill="none"/><path d="M25.6 0.4 L18.2 0.4 L25.6 7.8 Z" fill="#6f6f6f"/><path d="M23.6 2.4 L17.6 8.4" stroke="#6f6f6f" stroke-width="3" fill="none"/><path d="M0.4 25.6 L7.8 25.6 L0.4 18.2 Z" fill="#6f6f6f"/><path d="M2.4 23.6 L8.4 17.6" stroke="#6f6f6f" stroke-width="3" fill="none"/><path d="M25.6 25.6 L18.2 25.6 L25.6 18.2 Z" fill="#6f6f6f"/><path d="M23.6 23.6 L17.6 17.6" stroke="#6f6f6f" stroke-width="3" fill="none"/></svg>
<svg style="position:absolute;left:1530.7px;top:887.4px" width="32" height="32" viewBox="0 0 32 32"><path d="M0.6 1.6 H29.2 L16.8 14.4 V28.6 L12.8 30 V14.4 Z" fill="#b9b9b9"/><path d="M19.4 19.4 L29.2 29.2 M29.2 19.4 L19.4 29.2" stroke="#b9b9b9" stroke-width="1.9" fill="none"/></svg>
<svg style="position:absolute;left:0;top:0" width="2406" height="1372" viewBox="0 0 2406 1372"><path d="M1149.2 1051.2 V1372" stroke="#cfcfcf" stroke-width="1.4"/><path d="M1276.5 1051.2 V1372" stroke="#cfcfcf" stroke-width="1.4"/><path d="M1401.6 1051.2 V1372" stroke="#cfcfcf" stroke-width="1.4"/><path d="M1529 1051.2 V1372" stroke="#cfcfcf" stroke-width="1.4"/><path d="M1021.6 1372 V1051.2 H1578.9 V1372" fill="none" stroke="#cfcfcf" stroke-width="1.4"/><rect x="1022.4" y="1057.7" width="505.8" height="20.2" fill="#5f8b95"/><rect x="1022.4" y="1090.57" width="260" height="20.2" fill="#5f8b95"/><rect x="1022.4" y="1123.44" width="191.9" height="20.2" fill="#5f8b95"/><rect x="1022.4" y="1156.31" width="182.4" height="20.2" fill="#5f8b95"/><rect x="1022.4" y="1189.18" width="134.5" height="20.2" fill="#5f8b95"/><rect x="1022.4" y="1222.05" width="95.6" height="20.2" fill="#5f8b95"/><rect x="1022.4" y="1254.92" width="69.6" height="20.2" fill="#5f8b95"/><rect x="1022.4" y="1287.79" width="53.2" height="20.2" fill="#5f8b95"/><rect x="1022.4" y="1320.66" width="45.9" height="20.2" fill="#5f8b95"/><rect x="1022.4" y="1353.53" width="44.1" height="20.2" fill="#5f8b95"/><rect x="1397.3" y="986" width="33.6" height="25" fill="#5f8b95"/></svg>
<div class="t" style="left:1440.3px;top:989.61px;font-size:19.6px;line-height:19.6px;color:#454545;letter-spacing:0.69px;">ImporteBase</div>
<div style="position:absolute;left:1646.3px;top:876px;width:749.7px;height:524px;background:#fff;border:2px solid #dcdcdc;box-sizing:border-box;"></div>
<div class="t" style="left:1658.3px;top:893.12px;font-size:19.7px;line-height:19.7px;color:#404040;letter-spacing:0.03px;font-weight:bold;">VENTAS POR MARCA</div>
<svg style="position:absolute;left:2351px;top:889.6px" width="26" height="26" viewBox="0 0 26 26"><path d="M0.4 0.4 L7.8 0.4 L0.4 7.8 Z" fill="#6f6f6f"/><path d="M2.4 2.4 L8.4 8.4" stroke="#6f6f6f" stroke-width="3" fill="none"/><path d="M25.6 0.4 L18.2 0.4 L25.6 7.8 Z" fill="#6f6f6f"/><path d="M23.6 2.4 L17.6 8.4" stroke="#6f6f6f" stroke-width="3" fill="none"/><path d="M0.4 25.6 L7.8 25.6 L0.4 18.2 Z" fill="#6f6f6f"/><path d="M2.4 23.6 L8.4 17.6" stroke="#6f6f6f" stroke-width="3" fill="none"/><path d="M25.6 25.6 L18.2 25.6 L25.6 18.2 Z" fill="#6f6f6f"/><path d="M23.6 23.6 L17.6 17.6" stroke="#6f6f6f" stroke-width="3" fill="none"/></svg>
<svg style="position:absolute;left:2291px;top:887.4px" width="32" height="32" viewBox="0 0 32 32"><path d="M0.6 1.6 H29.2 L16.8 14.4 V28.6 L12.8 30 V14.4 Z" fill="#b9b9b9"/><path d="M19.4 19.4 L29.2 29.2 M29.2 19.4 L19.4 29.2" stroke="#b9b9b9" stroke-width="1.9" fill="none"/></svg>
<svg style="position:absolute;left:0;top:0" width="2406" height="1372" viewBox="0 0 2406 1372"><path d="M1831.4 1051.2 V1372" stroke="#cfcfcf" stroke-width="1.4"/><path d="M1944 1051.2 V1372" stroke="#cfcfcf" stroke-width="1.4"/><path d="M2059 1051.2 V1372" stroke="#cfcfcf" stroke-width="1.4"/><path d="M2171.6 1051.2 V1372" stroke="#cfcfcf" stroke-width="1.4"/><path d="M2285.8 1051.2 V1372" stroke="#cfcfcf" stroke-width="1.4"/><path d="M1717.2 1372 V1051.2 H2340 V1372" fill="none" stroke="#cfcfcf" stroke-width="1.4"/><rect x="1718" y="1083.3" width="565.2" height="99.5" fill="#5f8b95"/><rect x="1718" y="1247.6" width="5.8" height="99.5" fill="#5f8b95"/><rect x="2157.7" y="986" width="33.6" height="25" fill="#5f8b95"/></svg>
<div class="t" style="left:2200.7px;top:989.61px;font-size:19.6px;line-height:19.6px;color:#454545;letter-spacing:0.69px;">ImporteBase</div>
<svg style="position:absolute;left:0;top:0" width="2406" height="1372" viewBox="0 0 2406 1372"><path d="M1712.2 1067.53 H1717.2" stroke="#d4d4d4" stroke-width="1.2"/><path d="M1712.2 1100.46 H1717.2" stroke="#d4d4d4" stroke-width="1.2"/><path d="M1707.2 1132.28 H1717.2" stroke="#d4d4d4" stroke-width="1.2"/><path d="M1712.2 1164.47 H1717.2" stroke="#d4d4d4" stroke-width="1.2"/><path d="M1712.2 1198.49 H1717.2" stroke="#d4d4d4" stroke-width="1.2"/><path d="M1712.2 1231.41 H1717.2" stroke="#d4d4d4" stroke-width="1.2"/><path d="M1712.2 1265.07 H1717.2" stroke="#d4d4d4" stroke-width="1.2"/><path d="M1707.2 1297.26 H1717.2" stroke="#d4d4d4" stroke-width="1.2"/><path d="M1712.2 1329.82 H1717.2" stroke="#d4d4d4" stroke-width="1.2"/><path d="M1712.2 1362.74 H1717.2" stroke="#d4d4d4" stroke-width="1.2"/></svg>
</div></body></html>
